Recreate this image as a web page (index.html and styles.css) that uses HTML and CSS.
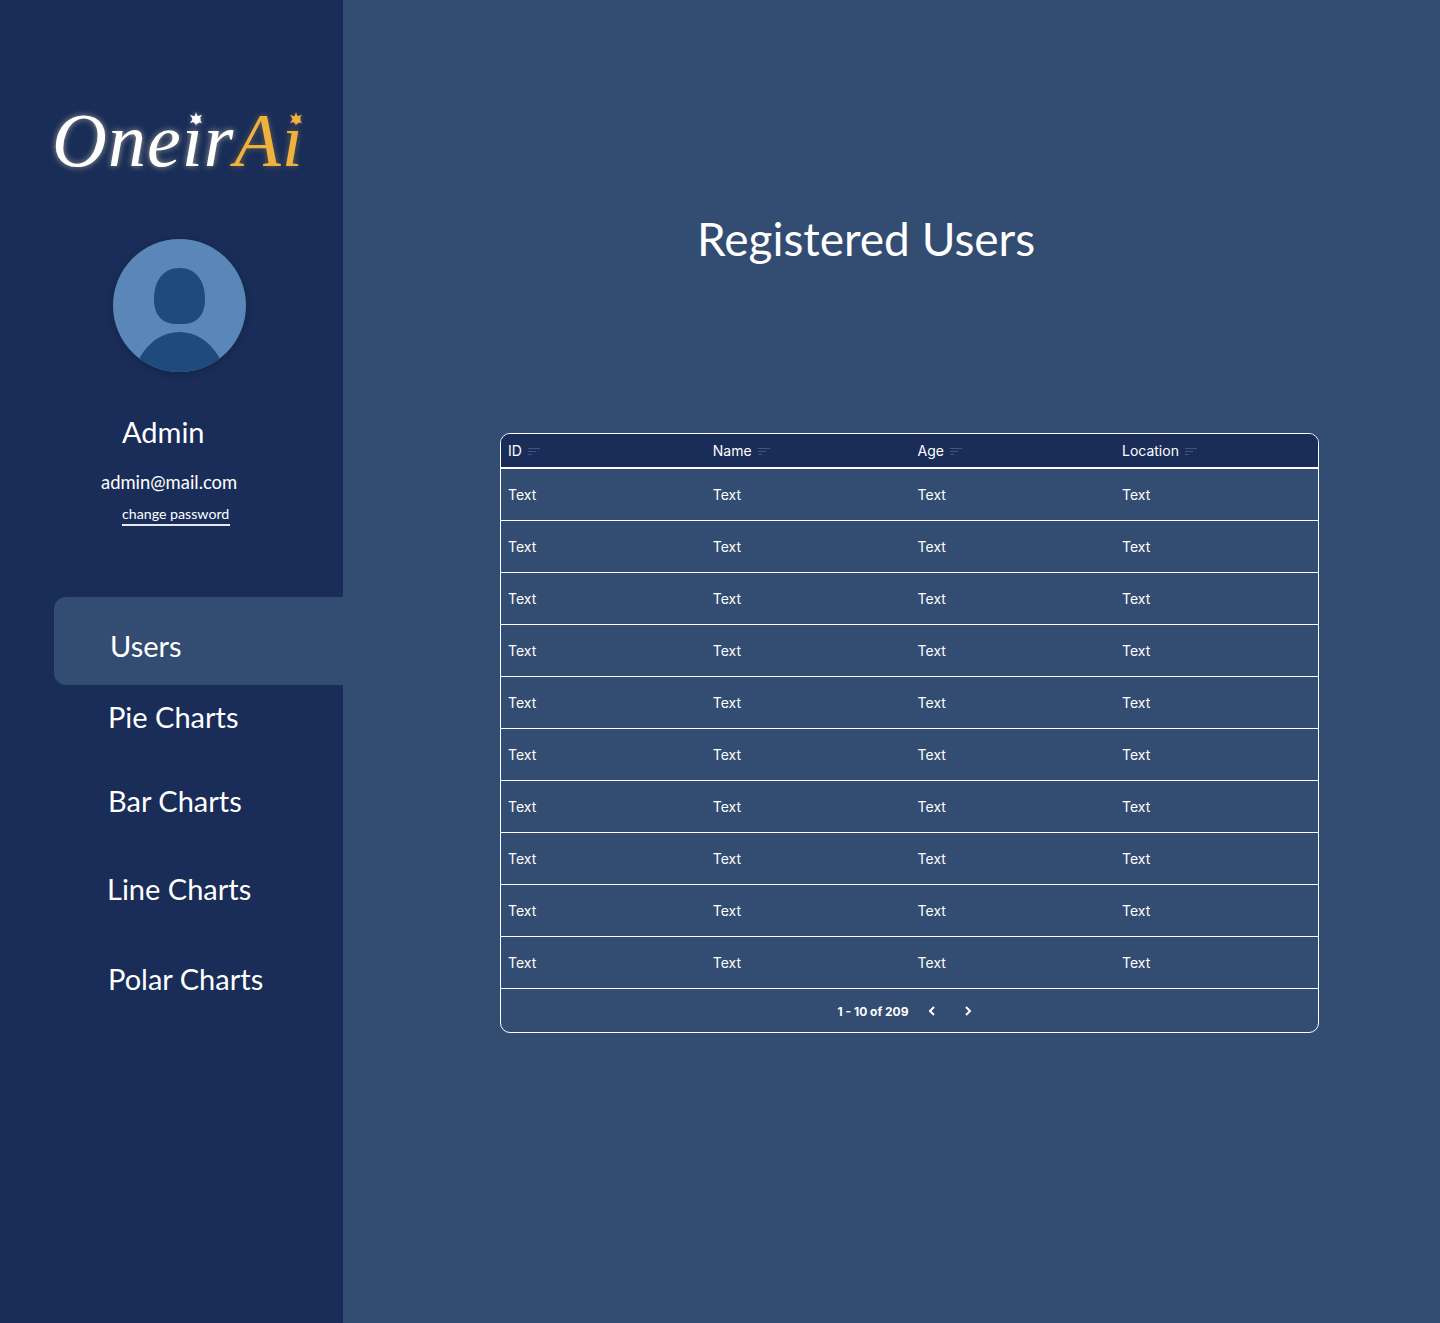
FILE: index.html
```html
<!DOCTYPE html>
<html>
<head>
<title>OneirAi - Registered Users</title>
<link rel="stylesheet" href="styles.css">
</head>
<body>
<div class="page">
    <aside class="sidebar">
        <div class="logo">
            <span class="logo-one">One<span class="logo-i">i<svg class="star" width="14" height="14" viewBox="0 0 10 10"><path d="M5 0L6 3.3L9.3 2L7.4 5L9.3 8L6 6.7L5 10L4 6.7L.7 8L2.6 5L.7 2L4 3.3Z" fill="#fff"/></svg></span>r</span><span class="logo-ai">A<span class="logo-i">i<svg class="star" width="14" height="14" viewBox="0 0 10 10"><path d="M5 0L6 3.3L9.3 2L7.4 5L9.3 8L6 6.7L5 10L4 6.7L.7 8L2.6 5L.7 2L4 3.3Z" fill="#efb23f"/></svg></span></span>
        </div>

        <div class="avatar">
            <svg width="133" height="133" viewBox="0 0 133 133">
                <defs><clipPath id="circle"><circle cx="66.5" cy="66.5" r="66.5"/></clipPath></defs>
                <circle cx="66.5" cy="66.5" r="66.5" fill="#5b87b8"/>
                <g clip-path="url(#circle)" fill="#1f4a7c">
                    <path d="M66.5 29C50 29 41 42 41 60C41 76 49 85 63 85H70C84 85 92 76 92 60C92 42 83 29 66.5 29Z"/>
                    <path d="M27 118C37 102 50 93 66.5 93C83 93 96 102 106 118L106 140H27Z"/>
                </g>
            </svg>
        </div>

        <div class="user-name">Admin</div>
        <div class="user-mail">admin@mail.com</div>
        <a class="change-pass" href="#">change password</a>

        <nav class="menu">
            <a class="menu-item active" href="#">Users</a>
            <a class="menu-item pie" href="#">Pie Charts</a>
            <a class="menu-item bar" href="#">Bar Charts</a>
            <a class="menu-item line" href="#">Line Charts</a>
            <a class="menu-item polar" href="#">Polar Charts</a>
        </nav>
    </aside>

    <main class="content">
        <h1 class="title">Registered Users</h1>

        <div class="table-box">
            <table class="users">
                <thead>
                    <tr>
                        <th>ID <svg class="sort" width="14" height="10" viewBox="0 0 14 10"><path d="M1 1.5H13M1 4.5H9M1 7.5H5" stroke="#3d5582" stroke-width="1.2" fill="none"/></svg></th>
                        <th>Name <svg class="sort" width="14" height="10" viewBox="0 0 14 10"><path d="M1 1.5H13M1 4.5H9M1 7.5H5" stroke="#3d5582" stroke-width="1.2" fill="none"/></svg></th>
                        <th>Age <svg class="sort" width="14" height="10" viewBox="0 0 14 10"><path d="M1 1.5H13M1 4.5H9M1 7.5H5" stroke="#3d5582" stroke-width="1.2" fill="none"/></svg></th>
                        <th>Location <svg class="sort" width="14" height="10" viewBox="0 0 14 10"><path d="M1 1.5H13M1 4.5H9M1 7.5H5" stroke="#3d5582" stroke-width="1.2" fill="none"/></svg></th>
                    </tr>
                </thead>
                <tbody>
                    <tr><td>Text</td><td>Text</td><td>Text</td><td>Text</td></tr>
                    <tr><td>Text</td><td>Text</td><td>Text</td><td>Text</td></tr>
                    <tr><td>Text</td><td>Text</td><td>Text</td><td>Text</td></tr>
                    <tr><td>Text</td><td>Text</td><td>Text</td><td>Text</td></tr>
                    <tr><td>Text</td><td>Text</td><td>Text</td><td>Text</td></tr>
                    <tr><td>Text</td><td>Text</td><td>Text</td><td>Text</td></tr>
                    <tr><td>Text</td><td>Text</td><td>Text</td><td>Text</td></tr>
                    <tr><td>Text</td><td>Text</td><td>Text</td><td>Text</td></tr>
                    <tr><td>Text</td><td>Text</td><td>Text</td><td>Text</td></tr>
                    <tr><td>Text</td><td>Text</td><td>Text</td><td>Text</td></tr>
                </tbody>
            </table>
            <div class="pager">
                <span class="pager-count">1 - 10 of 209</span>
                <svg class="pager-arrow" width="12" height="12" viewBox="0 0 12 12"><path d="M8 2L4 6L8 10" stroke="#fff" stroke-width="2" fill="none"/></svg>
                <svg class="pager-arrow" width="12" height="12" viewBox="0 0 12 12"><path d="M4 2L8 6L4 10" stroke="#fff" stroke-width="2" fill="none"/></svg>
            </div>
        </div>
    </main>
</div>
</body>
</html>
```

FILE: styles.css
```css
* {
    box-sizing: border-box;
}

body {
    margin: 0;
    background-color: #334c71;
    color: #fff;
    font-family: "Lato", "Noto Sans", sans-serif;
}

a {
    color: #fff;
    text-decoration: none;
}

.page {
    display: flex;
    min-height: 1323px;
}

.sidebar {
    width: 343px;
    flex-shrink: 0;
    background-color: #192d58;
    padding-top: 98px;
}

.logo {
    height: 84px;
    margin-left: 52px;
    font-family: "Liberation Serif", serif;
    font-style: italic;
    font-size: 76px;
    line-height: 84px;
    white-space: nowrap;
}

.logo-one {
    letter-spacing: 1px;
    text-shadow: 0 0 6px rgba(255, 240, 190, 0.6);
}

.logo-ai {
    letter-spacing: 1px;
    color: #efb23f;
    text-shadow: 0 0 6px rgba(239, 178, 63, 0.4);
}

.logo-i {
    position: relative;
}

.star {
    position: absolute;
    left: 7px;
    top: 14px;
}

.avatar {
    width: 133px;
    height: 133px;
    margin: 57px 0 0 113px;
    border-radius: 50%;
    box-shadow: 0 2px 8px rgba(0, 0, 0, 0.2);
}

.avatar svg {
    display: block;
}

.user-name {
    margin: 40px 0 0 122px;
    font-size: 29px;
    line-height: 40px;
}

.user-mail {
    margin: 17px 0 0 101px;
    font-size: 18.4px;
    line-height: 26px;
}

.change-pass {
    display: block;
    width: 108px;
    margin: 9px 0 0 122px;
    border-bottom: 2px solid #e6e9f0;
    font-size: 14.2px;
    line-height: 20px;
    white-space: nowrap;
}

.menu {
    margin-top: 71px;
    margin-left: 54px;
}

.menu-item {
    display: block;
    font-size: 29px;
    line-height: 40px;
}

.menu-item.active {
    height: 88px;
    padding: 29px 0 0 56px;
    background-color: #334c71;
    border-radius: 12px 0 0 12px;
}

.menu-item.pie {
    margin-top: 12px;
    padding-left: 54px;
}

.menu-item.bar {
    margin-top: 44px;
    padding-left: 54px;
}

.menu-item.line {
    margin-top: 48px;
    padding-left: 53px;
}

.menu-item.polar {
    margin-top: 50px;
    padding-left: 54px;
}

.content {
    flex: 1;
    padding: 211px 121px 0 157px;
}

.title {
    margin: 0 0 0 -4px;
    width: 740px;
    text-align: center;
    font-size: 46px;
    font-weight: 400;
    line-height: 56px;
}

.table-box {
    margin-top: 166px;
    border: 1px solid #fff;
    border-radius: 10px;
    overflow: hidden;
    font-family: "Inter", sans-serif;
    font-size: 14px;
}

.users {
    width: 100%;
    border-collapse: collapse;
    table-layout: fixed;
}

.users th {
    height: 34px;
    padding: 0 7px;
    background-color: #192d58;
    border-bottom: 2px solid #fff;
    font-weight: 400;
    text-align: left;
}

.users th:nth-child(1),
.users th:nth-child(2) {
    width: 204.8px;
}

.users th:nth-child(3) {
    width: 204.4px;
}

.sort {
    vertical-align: -1px;
    margin-left: 1px;
}

.users td {
    height: 52px;
    padding: 1px 7px 0;
    border-bottom: 1px solid #fff;
}

.pager {
    display: flex;
    justify-content: center;
    align-items: center;
    height: 43px;
    padding: 2px 8px 0 0;
}

.pager-count {
    font-size: 12px;
    font-weight: 700;
    margin-right: 17px;
}

.pager-arrow {
    margin-right: 24px;
}

.pager-arrow:last-child {
    margin-right: 0;
}
```
